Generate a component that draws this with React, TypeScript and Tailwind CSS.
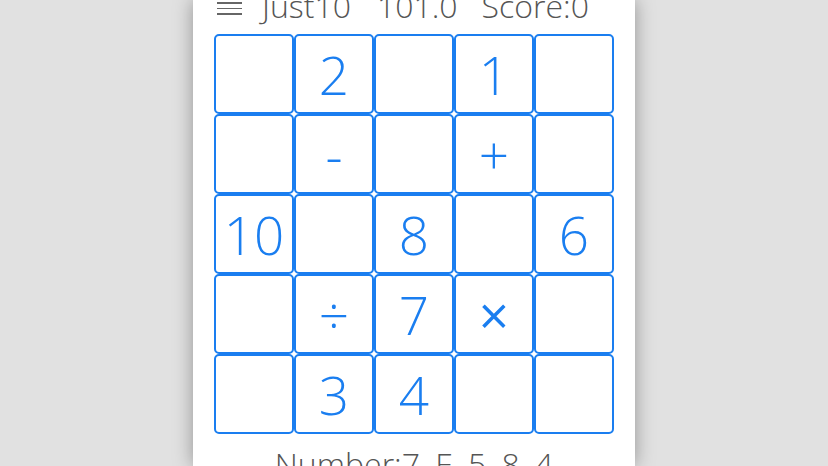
import type { ReactNode } from 'react';

const cells: string[][] = [
  ['', '2', '', '1', ''],
  ['', '-', '', '+', ''],
  ['10', '', '8', '', '6'],
  ['', '÷', '7', '×', ''],
  ['', '3', '4', '', ''],
];

function Cell({ children }: { children: ReactNode }) {
  const bold = children === '×';
  return (
    <div
      className={`flex h-[80px] w-[80px] items-center justify-center rounded-[5px] border-[2.5px] border-[#1a7ef0] text-[53px] leading-none text-[#1a7ef0] ${
        bold ? 'font-normal' : 'font-light'
      }`}
    >
      {children}
    </div>
  );
}

export default function App() {
  return (
    <div
      className="flex h-[466px] w-full justify-center overflow-hidden bg-[#e1e1e1]"
      style={{ fontFamily: '"Open Sans", "Noto Sans", sans-serif' }}
    >
      <div className="flex w-[442px] flex-col items-center bg-white shadow-[0_0_18px_rgba(0,0,0,0.35)]">
        {/* header */}
        <div className="mt-[-10px] flex h-[32px] w-[400px] shrink-0 items-start text-[32px] font-light leading-none text-[#555]">
          <div className="mt-[12px] ml-[3px] flex w-[25px] flex-col gap-[4px]">
            <span className="h-[1.5px] bg-[#666]" />
            <span className="h-[1.5px] bg-[#666]" />
            <span className="h-[1.5px] bg-[#666]" />
          </div>
          <span className="ml-[20px]">Just10</span>
          <span className="ml-[26px]">101.0</span>
          <span className="ml-[24px]">Score:0</span>
        </div>

        <div className="mt-[12px] grid w-[400px] shrink-0 grid-cols-5">
          {cells.flat().map((v, i) => (
            <Cell key={i}>{v}</Cell>
          ))}
        </div>

        <div className="mt-[14px] shrink-0 text-[32px] font-light leading-none text-[#555]">
          Number:7, E, 5, 8, 4
        </div>
      </div>
    </div>
  );
}
